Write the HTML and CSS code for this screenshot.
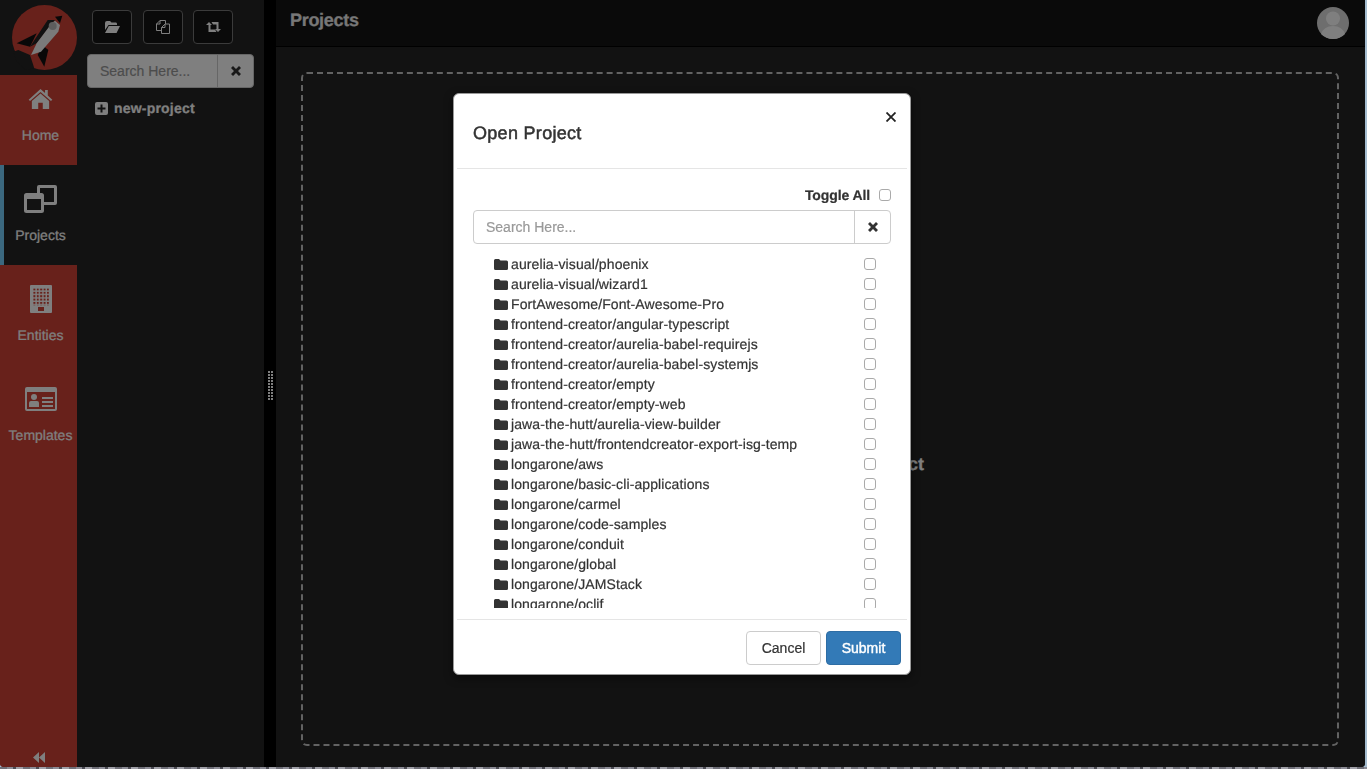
FILE: index.html
```html
<!DOCTYPE html>
<html lang="en">
<head>
    <meta charset="UTF-8">
    <title>Projects</title>
    <link rel="stylesheet" href="styles.css">
</head>
<body>

    <div class="app">
        <nav class="nav">
            <div class="logo">
                <svg width="65" height="65" viewBox="0 0 65 65">
                    <circle cx="32.5" cy="32.5" r="32.5" fill="#d04236"/>
                    <path d="M1.300 46.700 L6.300 45 L18 50 L22.300 63.300 L13 65 L4 55 Z" fill="#242424"/>
                    <path d="M4.700 38.300 L24.700 28.300 L18 41.700 Z" fill="#111"/>
                    <path d="M30.300 40 L36.300 45 L32.300 61.700 L25.700 50 Z" fill="#111"/>
                    <path d="M35.700 15 L43 15 L39.700 19 L24.700 38.300 L18 41.700 Z" fill="#222"/>
                    <path d="M39.700 18.300 L43 15.700 L48 20 L46.300 26.700 L29 46.700 L19 50 L24.700 38.300 Z" fill="#f4f4f4"/>
                    <path d="M43 11.700 L50.300 10.700 L48 18.300 Z" fill="#111"/>
                    <circle cx="40.700" cy="21" r="4" fill="#bbb"/>
                </svg>
            </div>
            <a class="nav-item home">
                <span class="nav-icon">
                    <svg width="25" height="20" viewBox="0 0 26 22"><path d="M13 0 L18 4.500 V1 H21 V7.200 L26 11.700 L24.500 13.300 L13 3.200 L1.500 13.300 L0 11.700 Z M13 5 L22.500 13.300 V22 H15.500 V15 H10.500 V22 H3.500 V13.300 Z" fill="#fff"/></svg>
                </span>
                <span class="nav-label">Home</span>
            </a>
            <a class="nav-item active">
                <span class="nav-icon">
                    <svg width="33" height="28" viewBox="0 0 33 28">
                        <path fill-rule="evenodd" fill="#fff" d="M15 0 H31 Q33 0 33 2 V18 Q33 20 31 20 H15 Q13 20 13 18 V2 Q13 0 15 0 Z M16 3 V17 H30 V3 Z"/>
                        <rect x="1.500" y="9.500" width="17" height="17" rx="1" fill="#242424" stroke="#fff" stroke-width="3"/>
                        <rect x="1" y="9" width="18" height="5" fill="#fff"/>
                    </svg>
                </span>
                <span class="nav-label">Projects</span>
            </a>
            <a class="nav-item">
                <span class="nav-icon">
                    <svg width="22" height="28" viewBox="0 0 22 28">
                        <defs>
                            <pattern id="windows" patternUnits="userSpaceOnUse" width="3.400" height="3.400">
                                <rect width="2" height="2" fill="#d04236"/>
                            </pattern>
                        </defs>
                        <rect width="22" height="28" rx="1" fill="#fff"/>
                        <rect x="3" y="3.400" width="16" height="17" fill="url(#windows)"/>
                        <rect x="8" y="22" width="6" height="4" fill="#d04236"/>
                    </svg>
                </span>
                <span class="nav-label">Entities</span>
            </a>
            <a class="nav-item">
                <span class="nav-icon">
                    <svg width="32" height="24" viewBox="0 0 32 24"><path fill-rule="evenodd" fill="#fff" d="M2 0 H30 Q32 0 32 2 V22 Q32 24 30 24 H2 Q0 24 0 22 V2 Q0 0 2 0 Z M2 5 V22 H30 V5 Z"/><circle cx="9" cy="10" r="3" fill="#fff"/><path d="M4 20 V16 Q4 14 6 14 H12 Q14 14 14 16 V20 Z M17 10 H28 V12 H17 Z M17 14 H28 V16 H17 Z M17 18 H28 V20 H17 Z" fill="#fff"/></svg>
                </span>
                <span class="nav-label">Templates</span>
            </a>
            <div class="nav-collapse">
                <svg width="12" height="11" viewBox="0 0 12 11"><path d="M6 0 V11 L0 5.500 Z M12 0 V11 L6 5.500 Z" fill="#fff"/></svg>
            </div>
        </nav>

        <aside class="panel">
            <div class="panel-tools">
                <button class="tool">
                    <svg width="15" height="12" viewBox="0 0 15 12"><path d="M0 2 Q0 0 2 0 H5 L6.500 1.500 H11 Q12 1.500 12 3 V4 H3.500 L0 9 Z M3.800 5 H15 L11.500 12 H0 Z" fill="#fff"/></svg>
                </button>
                <button class="tool">
                    <svg width="14" height="14" viewBox="0 0 14 14"><path d="M4 0.500 H9.500 V4 M4 0.500 L0.500 4 V10.500 H5 M4 0.500 V4 H0.500 M9 4 H13.500 V13.500 H5.500 V7.500 Z M9 4 V7.500 H5.500" fill="none" stroke="#fff"/></svg>
                </button>
                <button class="tool">
                    <svg width="15" height="10" viewBox="0 0 15 10"><path d="M3 0 L6 3 H4.500 V7.500 H9 L10.500 10 H2.500 V3 H0 Z M5.500 0 H12.500 V7 H15 L12 10 L9 7 H10.500 V2.500 H7 Z" fill="#fff"/></svg>
                </button>
            </div>
            <div class="search panel-search">
                <input type="text" placeholder="Search Here...">
                <span class="search-clear"><svg class="times" viewBox="0 0 10 10"><path d="M2 0 L5 3 L8 0 L10 2 L7 5 L10 8 L8 10 L5 7 L2 10 L0 8 L3 5 L0 2 Z"/></svg></span>
            </div>
            <div class="tree-item">
                <svg width="13" height="13" viewBox="0 0 13 13"><path fill-rule="evenodd" fill="#fff" d="M2 0 H11 Q13 0 13 2 V11 Q13 13 11 13 H2 Q0 13 0 11 V2 Q0 0 2 0 Z M5.500 2.500 V5.500 H2.500 V7.500 H5.500 V10.500 H7.500 V7.500 H10.500 V5.500 H7.500 V2.500 Z"/></svg>
                <span>new-project</span>
            </div>
        </aside>

        <div class="splitter"><span class="grip"></span></div>

        <main class="main">
            <header class="topbar">
                <h1>Projects</h1>
                <svg class="avatar" width="32" height="32" viewBox="0 0 32 32">
                    <circle cx="16" cy="16" r="16" fill="#dcdcdc"/>
                    <circle cx="16" cy="11.500" r="7" fill="#fff"/>
                    <path d="M4 27 Q7 19 16 19 Q25 19 28 27 Q23 32 16 32 Q9 32 4 27 Z" fill="#fff"/>
                </svg>
            </header>
            <div class="drop-wrap">
                <div class="drop">
                    <span class="drop-text">Select or Open a Project</span>
                </div>
            </div>
        </main>

        <div class="backdrop"></div>
    </div>

    <div class="modal">
        <div class="modal-header">
            <h4>Open Project</h4>
            <svg class="modal-close" width="10" height="10" viewBox="0 0 10 10"><path d="M0.500 0.500 L9.500 9.500 M9.500 0.500 L0.500 9.500" stroke="#222" stroke-width="1.800"/></svg>
        </div>
        <div class="modal-body">
            <div class="toggle-all">
                <label for="toggleAll">Toggle All</label>
                <input type="checkbox" id="toggleAll">
            </div>
            <div class="search">
                <input type="text" placeholder="Search Here...">
                <span class="search-clear"><svg class="times" viewBox="0 0 10 10"><path d="M2 0 L5 3 L8 0 L10 2 L7 5 L10 8 L8 10 L5 7 L2 10 L0 8 L3 5 L0 2 Z"/></svg></span>
            </div>
            <ul class="repo-list" id="repoList"></ul>
        </div>
        <div class="modal-footer">
            <button class="btn">Cancel</button>
            <button class="btn btn-primary">Submit</button>
        </div>
    </div>

    <script>
        const repos = [
            "aurelia-visual/phoenix",
            "aurelia-visual/wizard1",
            "FortAwesome/Font-Awesome-Pro",
            "frontend-creator/angular-typescript",
            "frontend-creator/aurelia-babel-requirejs",
            "frontend-creator/aurelia-babel-systemjs",
            "frontend-creator/empty",
            "frontend-creator/empty-web",
            "jawa-the-hutt/aurelia-view-builder",
            "jawa-the-hutt/frontendcreator-export-isg-temp",
            "longarone/aws",
            "longarone/basic-cli-applications",
            "longarone/carmel",
            "longarone/code-samples",
            "longarone/conduit",
            "longarone/global",
            "longarone/JAMStack",
            "longarone/oclif"
        ];

        const folder = '<svg width="14" height="11" viewBox="0 0 14 11"><path d="M1.500 0 H5 L6.500 1.500 H12.500 Q14 1.500 14 3 V9.500 Q14 11 12.500 11 H1.500 Q0 11 0 9.500 V1.500 Q0 0 1.500 0 Z" fill="#333"/></svg>';

        document.getElementById("repoList").innerHTML = repos.map(function(name) {
            return '<li class="repo">' + folder + '<span class="repo-name">' + name + '</span><input type="checkbox"></li>';
        }).join("");
    </script>

</body>
</html>
```

FILE: styles.css
```css
* {
    box-sizing: border-box;
}
html, body {
    height: 100%;
}
body {
    margin: 0;
    overflow: hidden;
    font-family: "Liberation Sans", Arial, sans-serif;
    font-size: 14px;
    color: #333;
    text-rendering: geometricPrecision;
    -webkit-text-stroke: 0.2px;
    /* desktop showing around the window */
    background-color: #a5bdd0;
    background-image: repeating-linear-gradient(90deg, #6f6f78 0 7px, #8c8c96 7px 13px, #4c4c54 13px 16px, #a0a0a8 16px 23px);
    background-size: 100% 2px;
    background-position: 0 100%;
    background-repeat: no-repeat;
}
input[type="checkbox"] {
    appearance: none;
    width: 12px;
    height: 12px;
    margin: 0;
    background: white;
    border: 1px solid #aaa;
    border-radius: 3px;
}
.app {
    position: relative;
    display: flex;
    width: 1365px;
    height: 767px;
    overflow: hidden;
    border-radius: 0 0 4px 4px;
    background-color: #242424;
}

/* left nav */
.nav {
    width: 77px;
    display: flex;
    flex-direction: column;
    background-color: #d04236;
    color: white;
}
.logo {
    height: 75px;
    padding: 5px 0 0 12px;
    background-color: #242424;
}
.logo svg {
    display: block;
}
.nav-item {
    height: 100px;
    display: flex;
    flex-direction: column;
    align-items: center;
    padding-top: 19px;
    gap: 12px;
    border-left: 4px solid transparent;
}
.nav-icon {
    height: 29px;
    display: flex;
    align-items: center;
}
.nav-label {
    line-height: 20px;
}
.nav-item.home {
    height: 90px;
    padding-top: 9px;
}
.nav-item.active {
    background-color: #242424;
    border-left-color: #77d0ff;
}
.nav-collapse {
    margin-top: auto;
    height: 17px;
    text-align: center;
}

/* project panel */
.panel {
    width: 187px;
    padding: 10px 10px 0;
    background-color: #242424;
}
.panel-tools {
    display: flex;
    gap: 10.700px;
    padding-left: 5px;
}
.tool {
    width: 40px;
    height: 34px;
    padding: 0;
    display: flex;
    align-items: center;
    justify-content: center;
    background-color: #141414;
    border: 1px solid #777;
    border-radius: 4px;
}
.search {
    display: flex;
    height: 34px;
    background: white;
    border: 1px solid #ccc;
    border-radius: 4px;
}
.search input {
    flex: 1;
    min-width: 0;
    padding: 0 12px;
    border: none;
    background: none;
    font: inherit;
    outline: none;
}
.search input::placeholder {
    color: #999;
}
.search-clear {
    width: 36px;
    display: flex;
    align-items: center;
    justify-content: center;
    border-left: 1px solid #ccc;
}
.times {
    width: 10px;
    height: 10px;
    fill: #333;
}
.panel-search {
    margin-top: 10px;
}
.tree-item {
    display: flex;
    align-items: center;
    gap: 6px;
    margin: 10px 0 0 8px;
    font-weight: bold;
    letter-spacing: 0.2px;
    color: white;
    line-height: 20px;
}

/* splitter */
.splitter {
    width: 12px;
    display: flex;
    align-items: center;
    justify-content: center;
    background-color: black;
}
.grip {
    width: 5px;
    height: 30px;
    margin-top: 5px;
    background-image: conic-gradient(at 2px 2px, transparent 75%, #fff 0);
    background-size: 3px 3px;
}

/* main area */
.main {
    flex: 1;
    display: flex;
    flex-direction: column;
    background-color: #242424;
}
.topbar {
    height: 47px;
    display: flex;
    align-items: center;
    justify-content: space-between;
    padding: 0 16px 6px 14px;
    background-color: #151515;
    border-bottom: 1px solid black;
}
.topbar h1 {
    margin: 0;
    font-size: 18px;
    letter-spacing: -0.3px;
    color: #eee;
}
.avatar {
    margin-top: 6px;
}
.drop-wrap {
    flex: 1;
    padding: 25px 26px 21px 25px;
}
.drop {
    height: 100%;
    display: flex;
    align-items: center;
    justify-content: center;
    padding-top: 110px;
    border: 2px dashed #c4c4c4;
    border-radius: 6px;
}
.drop-text {
    font-size: 18px;
    font-weight: bold;
    color: white;
}

/* modal */
.backdrop {
    position: absolute;
    inset: 0;
    background: rgba(0, 0, 0, 0.5);
}
.modal {
    position: fixed;
    left: 453px;
    top: 93px;
    width: 458px;
    height: 582px;
    display: flex;
    flex-direction: column;
    padding: 0 3px;
    background: white;
    border: 1px solid #999;
    border-radius: 6px;
    box-shadow: 0 3px 9px rgba(0, 0, 0, 0.5);
}
.modal-header {
    height: 75px;
    padding: 0 0 0 16px;
    display: flex;
    align-items: center;
    flex: none;
    border-bottom: 1px solid #e5e5e5;
    position: relative;
}
.modal-header h4 {
    margin: 4px 0 0;
    font-size: 18px;
    font-weight: normal;
    letter-spacing: 0.3px;
    -webkit-text-stroke: 0.5px #333;
}
.modal-close {
    position: absolute;
    top: 18px;
    right: 11px;
}
.modal-body {
    flex: 1;
    min-height: 0;
    padding: 0 16px;
    display: flex;
    flex-direction: column;
}
.toggle-all {
    display: flex;
    align-items: center;
    justify-content: flex-end;
    gap: 9px;
    height: 41px;
    padding: 13px 0 2px;
}
.toggle-all label {
    font-weight: bold;
    letter-spacing: -0.1px;
}
.repo-list {
    flex: 1;
    min-height: 0;
    overflow: hidden;
    list-style: none;
    margin: 10px 0 11px;
    padding: 0 15px 0 21px;
}
.repo {
    height: 20px;
    display: flex;
    align-items: center;
    gap: 3px;
}
.repo svg {
    flex: none;
}
.repo-name {
    flex: 1;
    letter-spacing: 0.1px;
}
.modal-footer {
    height: 55px;
    flex: none;
    display: flex;
    align-items: flex-start;
    justify-content: flex-end;
    gap: 5px;
    padding: 11px 6px 0 0;
    border-top: 1px solid #e5e5e5;
}
.btn {
    width: 75px;
    height: 34px;
    font: inherit;
    color: #333;
    background: white;
    border: 1px solid #ccc;
    border-radius: 4px;
}
.btn-primary {
    color: white;
    background-color: #337ab7;
    border-color: #2e6da4;
    -webkit-text-stroke: 0.4px white;
}
```
